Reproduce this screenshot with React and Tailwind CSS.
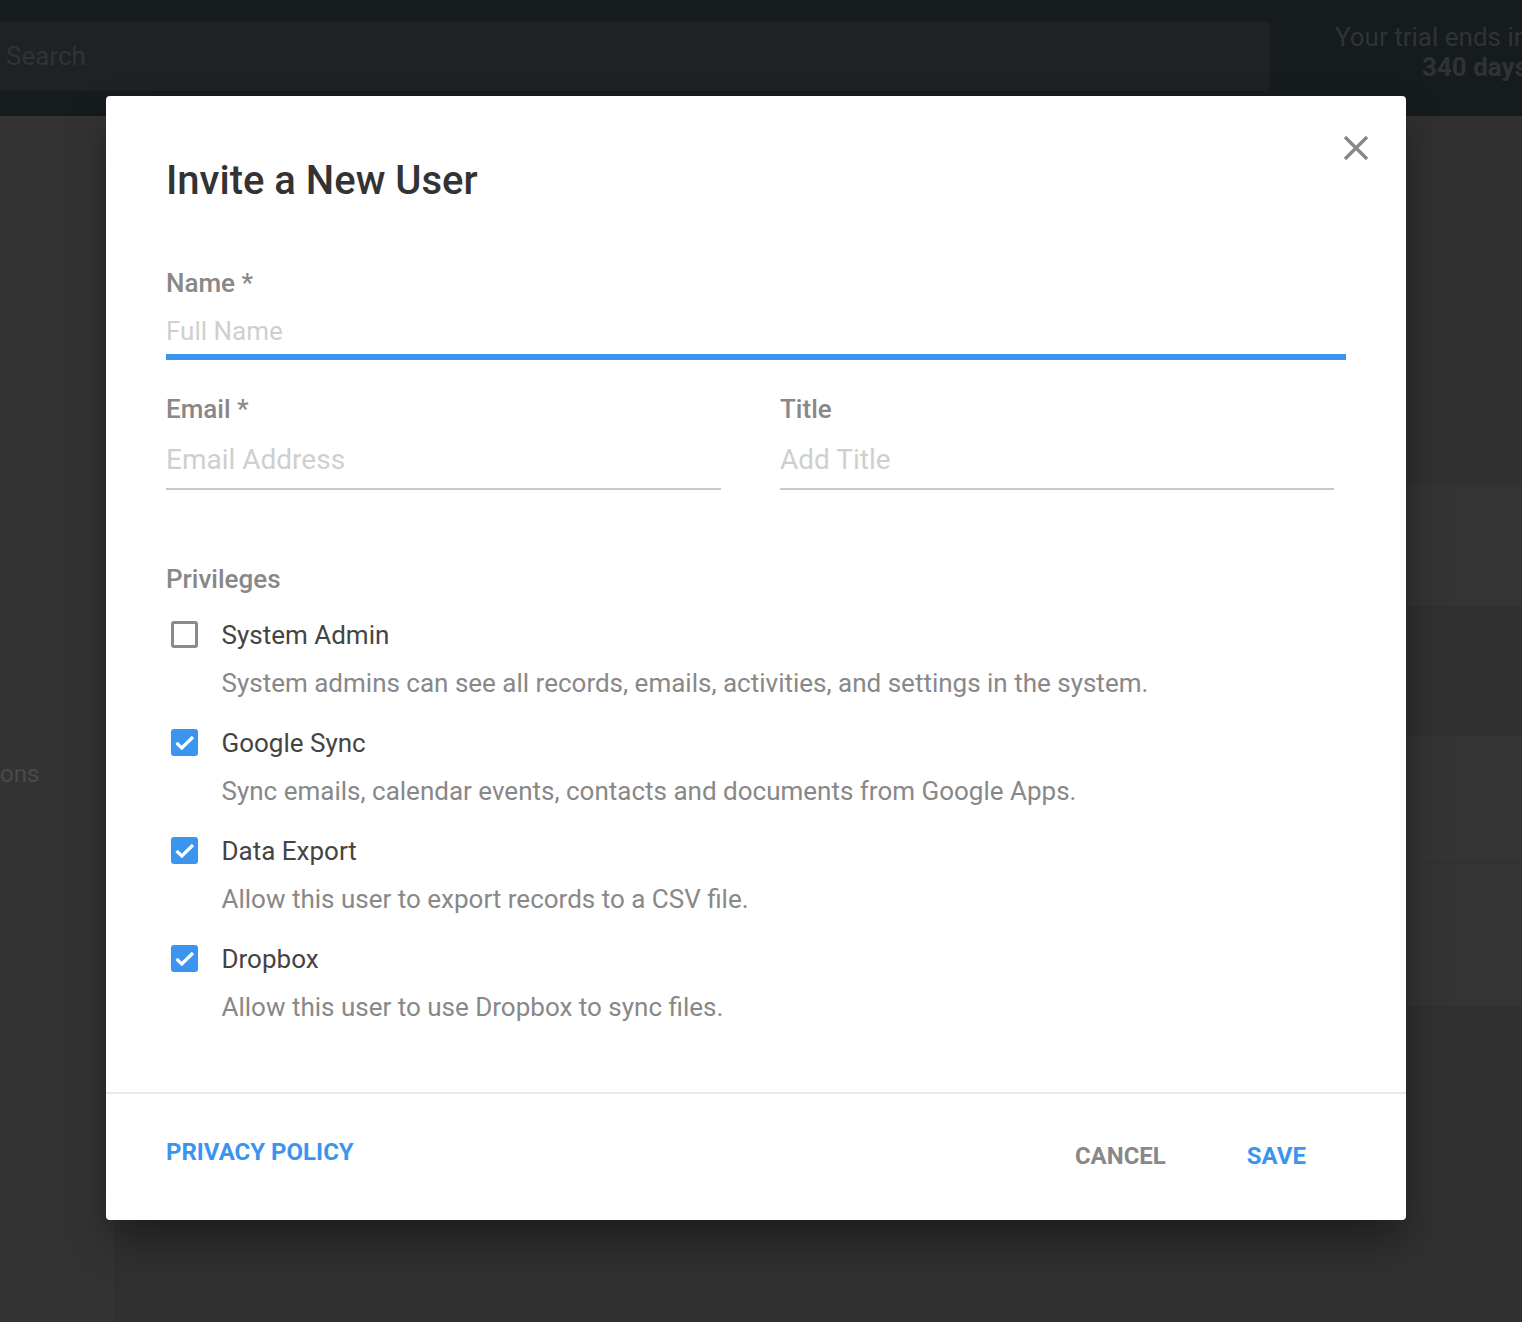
import React from 'react';

const privileges = [
  { name: 'System Admin', desc: 'System admins can see all records, emails, activities, and settings in the system.', on: false },
  { name: 'Google Sync', desc: 'Sync emails, calendar events, contacts and documents from Google Apps.', on: true },
  { name: 'Data Export', desc: 'Allow this user to export records to a CSV file.', on: true },
  { name: 'Dropbox', desc: 'Allow this user to use Dropbox to sync files.', on: true },
];

const Checkbox = ({ on }) =>
  on ? (
    <span className="block h-[27px] w-[27px] rounded-[3px] bg-[#3b95ee]">
      <svg width="27" height="27" viewBox="0 0 27 27" fill="none">
        <path d="M5.5 13.8 L10.8 19 L22 8" stroke="#fff" strokeWidth="3.2" />
      </svg>
    </span>
  ) : (
    <span className="block h-[27px] w-[27px] rounded-[3px] border-[3px] border-[#8a8a8a]" />
  );

const Field = ({ label, placeholder, className }) => (
  <div className={className}>
    <label className="block h-[36px] text-[26px] leading-[36px] font-medium text-[#888888]">{label}</label>
    <input
      readOnly
      placeholder={placeholder}
      className="mt-[12px] block h-[51px] w-full border-b-2 border-[#c8c8c8] pb-[9px] text-[28px] outline-none placeholder:text-[#cfcfcf]"
    />
  </div>
);

const App = () => {
  return (
    <div className="relative h-[1322px] w-full overflow-hidden bg-[#303030] font-['Roboto',sans-serif]">
      {/* page behind the dimmed overlay */}
      <header className="flex h-[116px] bg-[#161b1e] pt-[21px]">
        <div className="h-[70px] w-[1270px] shrink-0 rounded-r-[6px] bg-[#1e2225] pl-[6px] text-[26px] leading-[70px] text-[#303336]">Search</div>
        <div className="ml-[65px] w-[300px] shrink-0 pt-[1px] text-[26px] leading-[30px] whitespace-nowrap text-[#303336]">
          <div>Your trial ends in</div>
          <div className="pl-[87px] font-bold">340 days</div>
        </div>
      </header>
      <div className="flex">
        <aside className="h-[1206px] w-[113px] shrink-0 border-r border-[#353535] bg-[#333333] pt-[642px] text-[24px] leading-[32px] text-[#4a4a4a]">
          <span>ons</span>
        </aside>
        <main className="flex-1 pt-[368px]">
          <div className="h-[122px] bg-[#343434]" />
          <div className="h-[130px]" />
          <div className="h-[128px] border-b border-[#303030] bg-[#343434]" />
          <div className="h-[142px] bg-[#343434]" />
        </main>
      </div>

      {/* modal */}
      <div className="absolute inset-0 pt-[96px] pl-[106px]">
        <div className="flex h-[1124px] w-[1300px] flex-col rounded-[4px] bg-white shadow-[0_22px_40px_-4px_rgba(0,0,0,0.4)]">
          <div className="relative flex-1 px-[60px] pt-[59px]">
            <button className="absolute top-[40px] right-[38px] text-[#888888]">
              <svg width="24" height="24" viewBox="0 0 24 24" fill="none">
                <path d="M1 1 L23 23 M23 1 L1 23" stroke="currentColor" strokeWidth="3.4" />
              </svg>
            </button>
            <h1 className="text-[40px] leading-[52px] font-medium text-[#333333]">Invite a New User</h1>

            <div className="mt-[58px] w-[1180px]">
              <label className="block h-[36px] text-[26px] leading-[36px] font-medium text-[#888888]">Name *</label>
              <input
                readOnly
                placeholder="Full Name"
                className="mt-[8px] block h-[45px] w-full pb-[2px] text-[26px] outline-none placeholder:text-[#cfcfcf]"
              />
              <div className="h-[6px] bg-[#3b95ee]" />
            </div>

            <div className="mt-[31px] flex gap-[59px]">
              <Field label="Email *" placeholder="Email Address" className="w-[555px]" />
              <Field label="Title" placeholder="Add Title" className="w-[554px]" />
            </div>

            <div className="mt-[71px] h-[36px] text-[26px] leading-[36px] font-medium text-[#888888]">Privileges</div>
            <ul className="mt-[18px]">
              {privileges.map((p) => (
                <li key={p.name} className="flex h-[108px] gap-[24px] pl-[4.5px]">
                  <div className="pt-[6px]">
                    <Checkbox on={p.on} />
                  </div>
                  <div>
                    <div className="text-[26px] leading-[40px] text-[#444444]">{p.name}</div>
                    <div className="mt-[8px] text-[26px] leading-[40px] text-[#888888]">{p.desc}</div>
                  </div>
                </li>
              ))}
            </ul>
          </div>
          <footer className="flex h-[128px] items-center border-t-2 border-[#e9e9e9] pr-[100px] pl-[60px]">
            <a className="-mt-[10px] text-[24px] font-bold text-[#3b95ee]">PRIVACY POLICY</a>
            <button className="-mt-[2px] ml-auto text-[24px] font-bold text-[#888888]">CANCEL</button>
            <button className="-mt-[2px] ml-[81px] text-[24px] font-bold text-[#3b95ee]">SAVE</button>
          </footer>
        </div>
      </div>
    </div>
  );
};

export default App;
